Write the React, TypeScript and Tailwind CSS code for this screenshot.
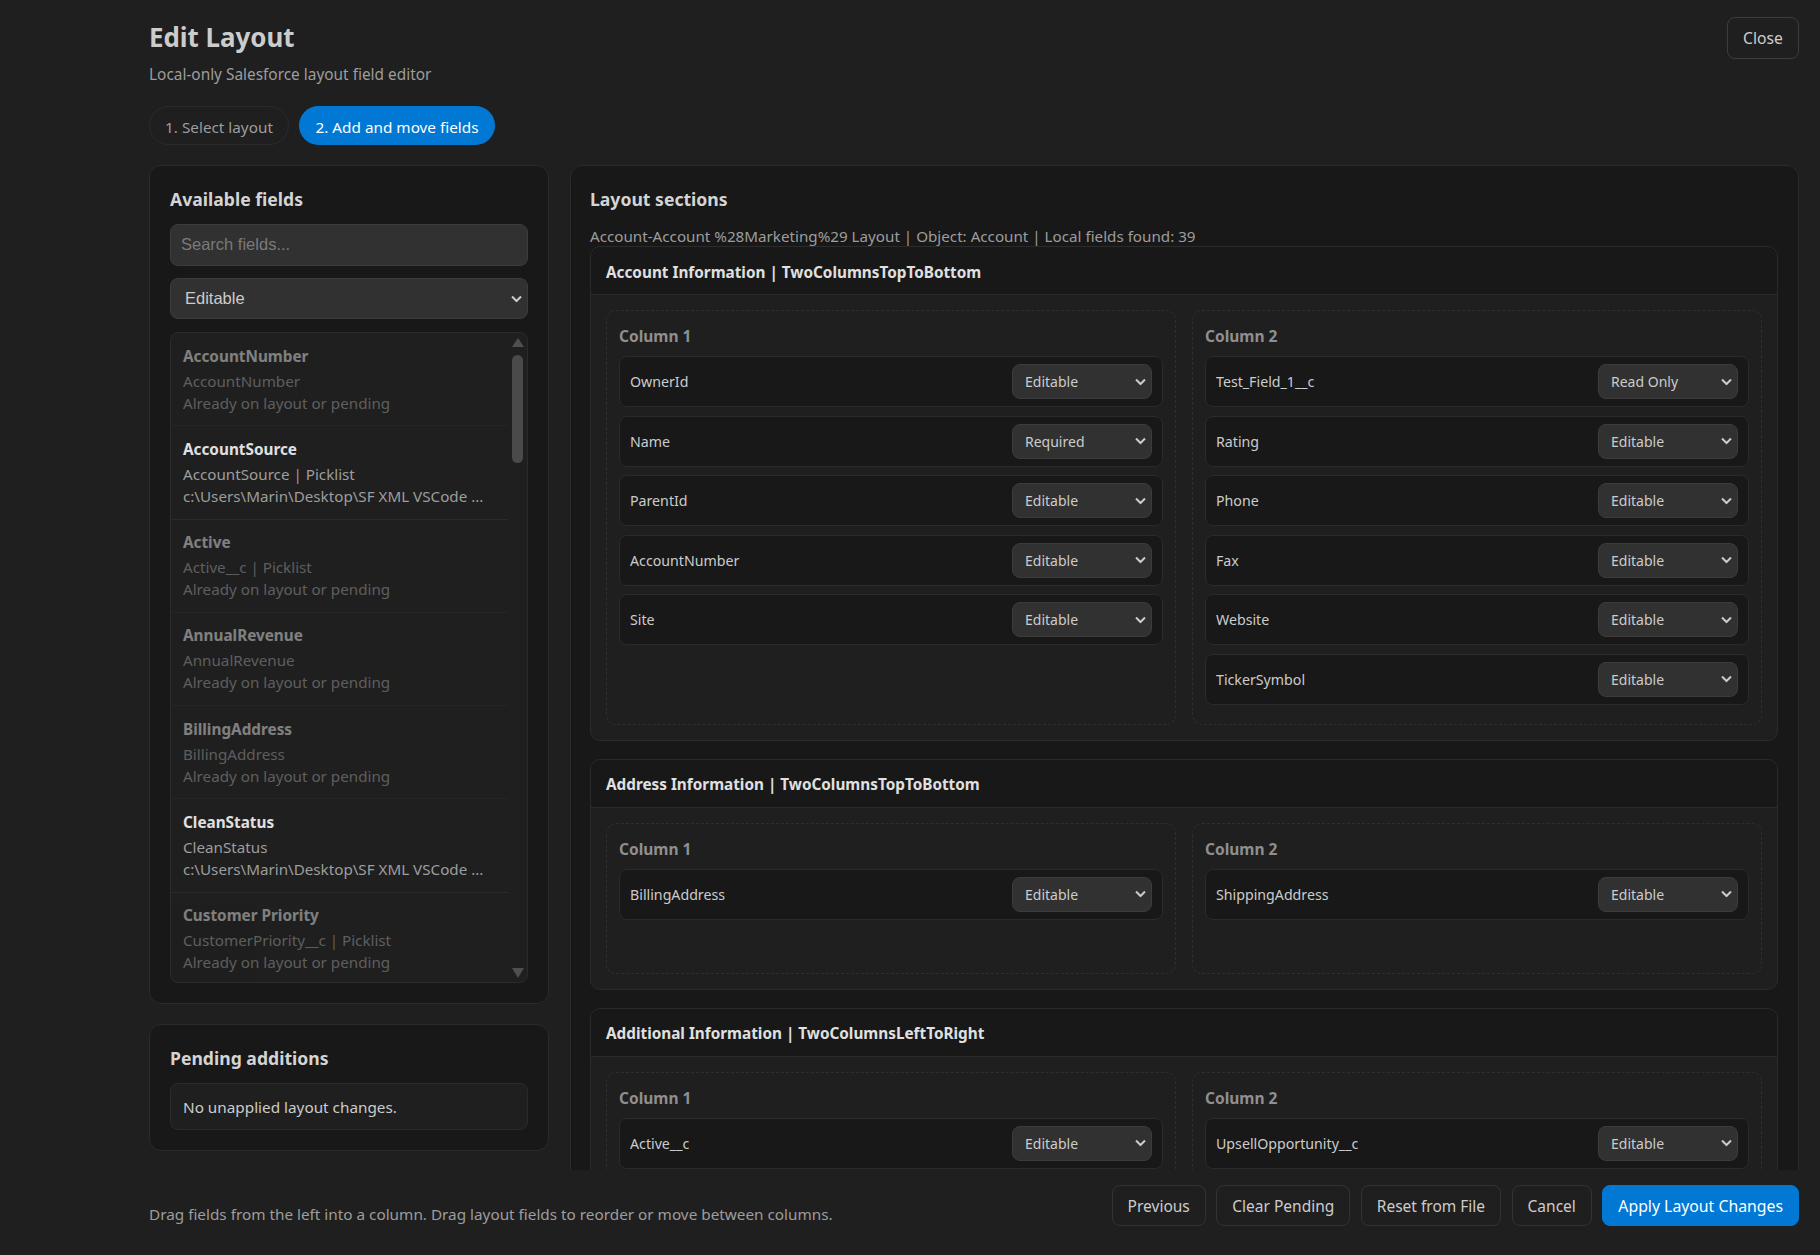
import { ReactNode } from "react";

const leftFields = [
  { title: "AccountNumber", sub: "AccountNumber", note: "Already on layout or pending", off: true },
  { title: "AccountSource", sub: "AccountSource | Picklist", note: "c:\\Users\\Marin\\Desktop\\SF XML VSCode ...", off: false },
  { title: "Active", sub: "Active__c | Picklist", note: "Already on layout or pending", off: true },
  { title: "AnnualRevenue", sub: "AnnualRevenue", note: "Already on layout or pending", off: true },
  { title: "BillingAddress", sub: "BillingAddress", note: "Already on layout or pending", off: true },
  { title: "CleanStatus", sub: "CleanStatus", note: "c:\\Users\\Marin\\Desktop\\SF XML VSCode ...", off: false },
  { title: "Customer Priority", sub: "CustomerPriority__c | Picklist", note: "Already on layout or pending", off: true },
];

type Row = [string, string];

const sections: { title: string; cols: Row[][] }[] = [
  {
    title: "Account Information | TwoColumnsTopToBottom",
    cols: [
      [["OwnerId", "Editable"], ["Name", "Required"], ["ParentId", "Editable"], ["AccountNumber", "Editable"], ["Site", "Editable"]],
      [["Test_Field_1__c", "Read Only"], ["Rating", "Editable"], ["Phone", "Editable"], ["Fax", "Editable"], ["Website", "Editable"], ["TickerSymbol", "Editable"]],
    ],
  },
  {
    title: "Address Information | TwoColumnsTopToBottom",
    cols: [[["BillingAddress", "Editable"]], [["ShippingAddress", "Editable"]]],
  },
  {
    title: "Additional Information | TwoColumnsLeftToRight",
    cols: [[["Active__c", "Editable"]], [["UpsellOpportunity__c", "Editable"]]],
  },
];

function Chevron() {
  return (
    <svg width="11" height="7" viewBox="0 0 11 7" className="pointer-events-none absolute top-1/2 right-[6px] -translate-y-1/2 text-[#cccccc]">
      <path d="M1 1l4.5 4.5L10 1" fill="none" stroke="currentColor" strokeWidth="2" />
    </svg>
  );
}

function Panel({ title, children }: { title: string; children: ReactNode }) {
  return (
    <section className="rounded-xl border border-[#2b2b2b] bg-[#181818] px-5 pt-[21px] pb-5">
      <h2 className="mb-3 text-[17.6px] leading-[25px] font-bold text-[#d4d4d4]">{title}</h2>
      {children}
    </section>
  );
}

function FieldRow({ name, access }: { name: string; access: string }) {
  return (
    <div className="flex h-[51px] items-center justify-between rounded-lg border border-[#2b2b2b] bg-[#181818] pr-[10px] pl-[10px]">
      <span className="pt-px text-[14.2px] text-[#cccccc]">{name}</span>
      <div className="relative">
        <select
          defaultValue={access}
          className="block h-[35px] w-[140px] appearance-none rounded-lg border border-[#3c3c3c] bg-[#313131] pl-3 text-[14px] text-[#cccccc]"
        >
          <option>Editable</option>
          <option>Required</option>
          <option>Read Only</option>
        </select>
        <Chevron />
      </div>
    </div>
  );
}

function Button({ children, primary }: { children: ReactNode; primary?: boolean }) {
  return (
    <button
      className={
        primary
          ? "h-[41px] rounded-lg border border-[#0078d4] bg-[#0078d4] px-[15px] pt-[2px] text-[15.8px] text-white"
          : "h-[41px] rounded-lg border border-[#333333] px-[15px] pt-[2px] text-[15.5px] text-[#cccccc]"
      }
    >
      {children}
    </button>
  );
}

export default function App() {
  return (
    <div className="flex h-[1255px] flex-col overflow-hidden bg-[#1f1f1f] pt-[17px] pr-[21px] pl-[149px] font-['Noto_Sans',sans-serif] text-[#cccccc]">
      <header className="flex items-start justify-between">
        <div>
          <h1 className="mt-px text-[25.9px] leading-[38px] font-bold text-[#cccccc]">Edit Layout</h1>
          <p className="mt-2 text-[15.4px] leading-[22px] text-[#9d9d9d]">Local-only Salesforce layout field editor</p>
          <div className="mt-5 flex gap-[10px]">
            <button className="h-[39px] w-[140px] rounded-full border border-[#2b2b2b] pt-[3px] text-[15.3px] text-[#9d9d9d]">1. Select layout</button>
            <button className="h-[39px] w-[196px] rounded-full bg-[#0078d4] pt-[3px] text-[15.3px] text-white">2. Add and move fields</button>
          </div>
        </div>
        <button className="h-[42px] w-[72px] rounded-lg border border-[#3c3c3c] pt-[2px] text-[15.7px] text-[#cccccc]">Close</button>
      </header>

      <main className="mt-5 grid h-[1005px] grid-cols-[400px_1fr] gap-[21px] overflow-hidden">
        <div className="flex flex-col gap-5">
          <Panel title="Available fields">
            <input
              placeholder="Search fields..."
              className="block h-[42px] w-full rounded-lg border border-[#3c3c3c] bg-[#313131] px-[10px] pb-px font-['Liberation_Sans',sans-serif] text-[16.5px] text-[#cccccc] outline-none placeholder:text-[#7a7a7a]"
            />
            <div className="relative mt-3">
              <select className="block h-[41px] w-full appearance-none rounded-lg border border-[#3c3c3c] bg-[#313131] pl-[14px] font-['Liberation_Sans',sans-serif] text-[16.5px] text-[#cccccc]">
                <option>Editable</option>
                <option>Read Only</option>
                <option>Required</option>
              </select>
              <Chevron />
            </div>
            <div className="mt-[13px] flex h-[651px] overflow-hidden rounded-lg border border-[#2b2b2b] bg-[#1f1f1f]">
              <ul className="min-w-0 flex-1">
                {leftFields.map((f) => (
                  <li key={f.title} className={`border-b border-[#2b2b2b] px-3 pt-[11.5px] pb-[11.8px] ${f.off ? "opacity-50" : ""}`}>
                    <div className="text-[15.3px] leading-[22px] font-bold text-[#e0e0e0]">{f.title}</div>
                    <div className="mt-[3px] text-[15.2px] leading-[22px] text-[#9d9d9d]">{f.sub}</div>
                    <div className="whitespace-nowrap text-[15.2px] leading-[22px] text-[#9d9d9d]">{f.note}</div>
                  </li>
                ))}
              </ul>
              <div className="flex w-[19px] flex-col items-start pt-[5px] pb-1 pl-1">
                <svg width="12" height="9" viewBox="0 0 12 9" className="text-[#4f4f4f]">
                  <path d="M6 0l6 9H0z" fill="currentColor" />
                </svg>
                <div className="mt-2 h-[108px] w-[11px] rounded-full bg-[#4a4a4a]" />
                <svg width="12" height="10" viewBox="0 0 12 10" className="mt-auto text-[#4f4f4f]">
                  <path d="M0 0h12L6 10z" fill="currentColor" />
                </svg>
              </div>
            </div>
          </Panel>
          <Panel title="Pending additions">
            <div className="flex h-[47px] items-center rounded-lg border border-[#2b2b2b] bg-[#1f1f1f] px-3 pt-px text-[15.3px] text-[#cccccc]">
              No unapplied layout changes.
            </div>
          </Panel>
        </div>

        <div className="min-w-0">
          <section className="rounded-xl border border-[#2b2b2b] bg-[#181818] pt-[21px] pr-5 pb-5 pl-[19px]">
            <h2 className="text-[17.6px] leading-[25px] font-bold text-[#d4d4d4]">Layout sections</h2>
            <p className="mt-[14px] h-5 text-[15.2px] leading-[20px] text-[#9d9d9d]">
              Account-Account %28Marketing%29 Layout | Object: Account | Local fields found: 39
            </p>
            <div className="flex flex-col gap-[18px]">
              {sections.map((s) => (
                <div key={s.title} className="overflow-hidden rounded-[10px] border border-[#2b2b2b] bg-[#1f1f1f]">
                  <div className="flex h-12 items-center border-b border-[#2b2b2b] bg-[#181818] px-[15px] pt-[3px] text-[15.3px] font-bold text-[#e0e0e0]">
                    {s.title}
                  </div>
                  <div className="grid grid-cols-2 gap-4 p-[15px]">
                    {s.cols.map((rows, i) => (
                      <div key={i} className="min-h-[151px] rounded-[10px] border border-dashed border-[#2f2f2f] px-3 pt-[13px] pb-[19px]">
                        <div className="mb-2 text-[15.5px] leading-6 font-bold text-[#8f8f8f]">Column {i + 1}</div>
                        <div className="flex flex-col gap-[8.5px]">
                          {rows.map(([name, access]) => (
                            <FieldRow key={name} name={name} access={access} />
                          ))}
                        </div>
                      </div>
                    ))}
                  </div>
                </div>
              ))}
            </div>
          </section>
        </div>
      </main>

      <footer className="flex items-end justify-between pt-[15px]">
        <p className="mb-px text-[15.3px] leading-[22px] text-[#9d9d9d]">Drag fields from the left into a column. Drag layout fields to reorder or move between columns.</p>
        <div className="flex gap-[10.5px]">
          <Button>Previous</Button>
          <Button>Clear Pending</Button>
          <Button>Reset from File</Button>
          <Button>Cancel</Button>
          <Button primary>Apply Layout Changes</Button>
        </div>
      </footer>
    </div>
  );
}
